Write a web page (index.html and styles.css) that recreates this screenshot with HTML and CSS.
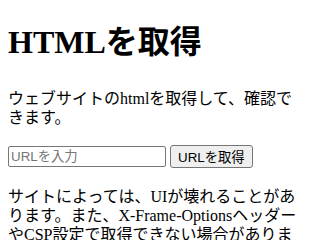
FILE: index.html
```html
<!DOCTYPE html>
<html lang="ja">
<head>
<meta charset="utf-8">
<title>HTMLを取得</title>
<link rel="stylesheet" href="styles.css">
</head>
<body class="page">
<h1 class="title">HTMLを取得</h1>
<p class="lead">ウェブサイトのhtmlを取得して、確認できます。</p>
<div class="form">
<input class="url-input" type="text" placeholder="URLを入力">
<button class="fetch-btn" type="button">URLを取得</button>
</div>
<p class="note">サイトによっては、UIが壊れることがあります。また、X-Frame-OptionsヘッダーやCSP設定で取得できない場合があります。</p>
</body>
</html>
```
FILE: styles.css
```css
.page {
  font-family: "Liberation Serif", "Noto Sans CJK JP", serif;
  margin: 0;
  padding: 0 8px;
  color: #000;
  background: #fff;
}
.title {
  font-size: 32px;
  font-weight: bold;
  line-height: 40px;
  margin: 22px 0 27px;
}
.lead, .note {
  font-size: 16px;
  line-height: 19px;
  max-width: 299px;
}
.lead {
  margin: 0 0 18px;
}
.form {
  display: flex;
  align-items: center;
  gap: 4px;
}
.url-input, .fetch-btn {
  font-family: "Liberation Sans", "Noto Sans CJK JP", sans-serif;
  font-size: 13.33px;
  box-sizing: border-box;
}
.url-input {
  width: 158px;
  height: 21px;
  padding: 1px 2px;
  border: 1px solid #767676;
  border-radius: 2px;
}
.url-input::placeholder {
  color: #757575;
}
.fetch-btn {
  height: 23px;
  padding: 1px 7px;
  border: 1px solid #767676;
  border-radius: 3px;
  background: #efefef;
  color: #000;
}
.note {
  margin: 19px 0 0;
}
```
